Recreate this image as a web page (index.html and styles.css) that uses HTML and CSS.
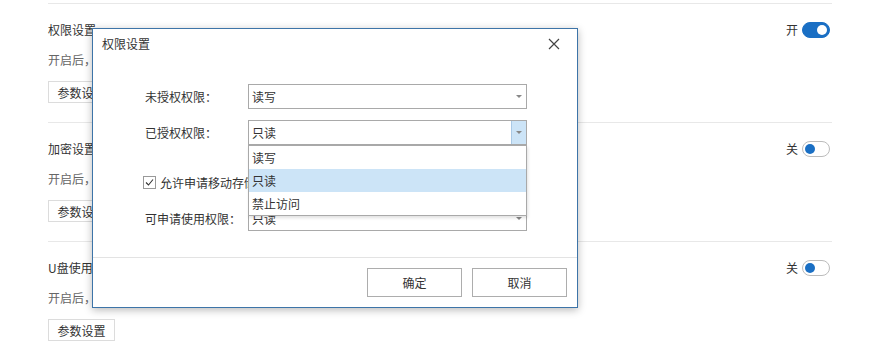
FILE: index.html
```html
<!DOCTYPE html>
<html lang="zh-CN">
<head>
<meta charset="utf-8">
<title>权限设置</title>
<link rel="stylesheet" href="styles.css">
</head>
<body>
<div class="page">
  <section class="setting">
    <div class="setting-head">
      <span class="setting-title">权限设置</span>
      <span class="switch-wrap">开<span class="switch on"><span class="knob"></span></span></span>
    </div>
    <div class="setting-desc">开启后，将对终端的访问权限进行统一管控</div>
    <button class="btn-small">参数设置</button>
  </section>
  <section class="setting">
    <div class="setting-head">
      <span class="setting-title">加密设置</span>
      <span class="switch-wrap">关<span class="switch"><span class="knob"></span></span></span>
    </div>
    <div class="setting-desc">开启后，将对移动存储设备进行加密</div>
    <button class="btn-small">参数设置</button>
  </section>
  <section class="setting">
    <div class="setting-head">
      <span class="setting-title">U盘使用设置</span>
      <span class="switch-wrap">关<span class="switch"><span class="knob"></span></span></span>
    </div>
    <div class="setting-desc">开启后，将对U盘的使用进行管控</div>
    <button class="btn-small">参数设置</button>
  </section>
</div>

<div class="dialog">
  <div class="dialog-head">
    <span class="dialog-title">权限设置</span>
    <svg class="close" width="12" height="12" viewBox="0 0 12 12"><path d="M1 1 L11 11 M11 1 L1 11" stroke="#444" stroke-width="1.2" fill="none"/></svg>
  </div>
  <div class="dialog-body">
    <div class="form-row">
      <span class="label">未授权权限：</span>
      <div class="select"><span class="value">读写</span><span class="arrow"></span></div>
    </div>
    <div class="form-row">
      <span class="label">已授权权限：</span>
      <div class="select open">
        <span class="value">只读</span><span class="arrow"></span>
        <ul class="dropdown">
          <li>读写</li>
          <li class="active">只读</li>
          <li>禁止访问</li>
        </ul>
      </div>
    </div>
    <div class="check-row">
      <span class="checkbox"><svg width="11" height="11" viewBox="0 0 11 11"><path d="M2 5.5 L4.5 8 L9 2.5" stroke="#333" stroke-width="1.1" fill="none"/></svg></span>
      <span>允许申请移动存储设备使用权限</span>
    </div>
    <div class="form-row">
      <span class="label">可申请使用权限：</span>
      <div class="select"><span class="value">只读</span><span class="arrow"></span></div>
    </div>
  </div>
  <div class="dialog-foot">
    <button class="btn">确定</button>
    <button class="btn">取消</button>
  </div>
</div>
</body>
</html>
```
FILE: styles.css
```css
* { box-sizing: border-box; }
html, body {
  margin: 0;
  padding: 0;
  background: #fff;
  font-family: "Noto Sans CJK SC", "Microsoft YaHei", sans-serif;
  font-size: 12px;
  color: #333;
}
.page {
  width: 784px;
  margin-left: 48px;
  padding-top: 3px;
}
.setting {
  border-top: 1px solid #e8e8e8;
  padding: 18px 0 19px;
  height: 119px;
}
.setting-head {
  display: flex;
  justify-content: space-between;
  align-items: center;
  height: 16px;
  line-height: 16px;
}
.setting-title { color: #333; }
.switch-wrap {
  display: flex;
  align-items: center;
  gap: 4px;
  margin-right: 2px;
}
.switch {
  display: inline-flex;
  align-items: center;
  width: 28px;
  height: 16px;
  border-radius: 8px;
  border: 1px solid #bcbcbc;
  background: #fff;
  padding: 0 2px;
}
.switch .knob {
  width: 10px;
  height: 10px;
  border-radius: 50%;
  background: #1a6fc4;
}
.switch.on {
  background: #1a6fc4;
  border-color: #1a6fc4;
  justify-content: flex-end;
}
.switch.on .knob { background: #fff; }
.setting-desc {
  margin-top: 14px;
  height: 16px;
  line-height: 16px;
  color: #666;
}
.btn-small {
  margin-top: 13px;
  height: 22px;
  width: 67px;
  padding: 0;
  border: 1px solid #dcdcdc;
  background: #fff;
  font-family: inherit;
  font-size: 12px;
  color: #333;
}

.dialog {
  position: absolute;
  left: 92px;
  top: 28px;
  width: 486px;
  height: 280px;
  background: #fff;
  border: 1px solid #3d74a8;
  box-shadow: 0 2px 8px rgba(0,0,0,0.28);
  display: flex;
  flex-direction: column;
}
.dialog-head {
  height: 30px;
  line-height: 30px;
  display: flex;
  justify-content: space-between;
  align-items: center;
  padding: 0 17px 0 9px;
}
.dialog-title { font-size: 12px; color: #333; }
.close { display: block; }
.dialog-body {
  flex: 1;
  padding: 25px 0 0 52px;
  display: flex;
  flex-direction: column;
}
.form-row {
  display: flex;
  align-items: center;
  height: 25px;
  margin-bottom: 11px;
}
.label {
  width: 103px;
  color: #333;
}
.select {
  position: relative;
  width: 279px;
  height: 25px;
  border: 1px solid #a9a9a9;
  display: flex;
  align-items: center;
  justify-content: space-between;
  background: #fff;
}
.select .value { padding-left: 3px; }
.select .arrow {
  width: 15px;
  height: 100%;
  display: flex;
  align-items: center;
  justify-content: center;
}
.select .arrow::before {
  content: "";
  border-left: 3px solid transparent;
  border-right: 3px solid transparent;
  border-top: 3px solid #888;
}
.select.open .arrow {
  background: #cce4f7;
  border-left: 1px solid #a9c9e6;
}
.dropdown {
  position: absolute;
  left: -1px;
  top: 24px;
  width: 279px;
  margin: 0;
  padding: 0;
  list-style: none;
  background: #fff;
  border: 1px solid #a9a9a9;
  box-shadow: 1px 2px 3px rgba(0,0,0,0.12);
  z-index: 2;
}
.dropdown li {
  height: 23px;
  line-height: 23px;
  padding-left: 3px;
}
.dropdown li.active { background: #cce4f7; }
.check-row {
  display: flex;
  align-items: center;
  gap: 4px;
  height: 25px;
  margin: 14px 0 11px -2px;
}
.checkbox {
  width: 13px;
  height: 13px;
  border: 1px solid #999;
  display: flex;
  align-items: center;
  justify-content: center;
}
.dialog-foot {
  border-top: 1px solid #e3e3e3;
  padding: 10px 10px 10px 0;
  display: flex;
  justify-content: flex-end;
  gap: 10px;
}
.btn {
  width: 95px;
  height: 29px;
  border: 1px solid #adadad;
  background: #fff;
  font-family: inherit;
  font-size: 12px;
  color: #333;
  padding: 0;
}
```
